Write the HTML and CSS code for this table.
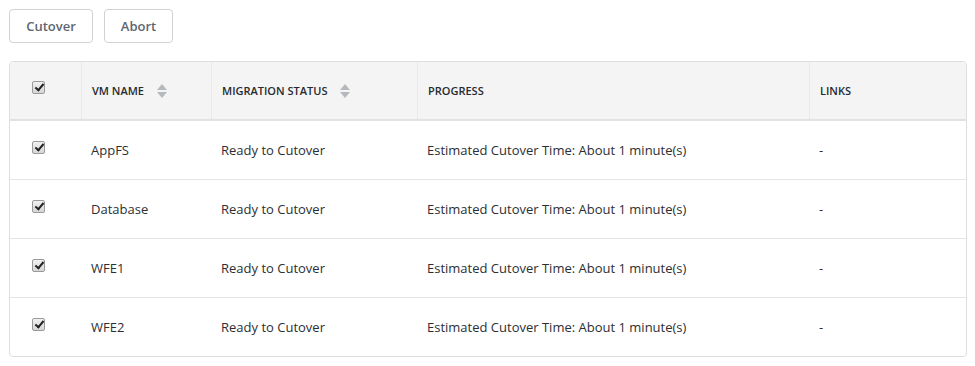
FILE: index.html
```html
<!DOCTYPE html>
<html>
<head>
<meta charset="utf-8">
<link rel="stylesheet" href="styles.css">
</head>
<body>
<div class="page">
  <div class="toolbar">
    <button class="btn">Cutover</button>
    <button class="btn">Abort</button>
  </div>
  <div class="table">
    <div class="row head">
      <div class="cell c-check"><span class="cb"></span></div>
      <div class="cell c-name">VM NAME <span class="sort"><i class="up"></i><i class="down"></i></span></div>
      <div class="cell c-status">MIGRATION STATUS <span class="sort"><i class="up"></i><i class="down"></i></span></div>
      <div class="cell c-progress">PROGRESS</div>
      <div class="cell c-links">LINKS</div>
    </div>
    <div class="row">
      <div class="cell c-check"><span class="cb"></span></div>
      <div class="cell c-name">AppFS</div>
      <div class="cell c-status">Ready to Cutover</div>
      <div class="cell c-progress">Estimated Cutover Time: About 1 minute(s)</div>
      <div class="cell c-links">-</div>
    </div>
    <div class="row">
      <div class="cell c-check"><span class="cb"></span></div>
      <div class="cell c-name">Database</div>
      <div class="cell c-status">Ready to Cutover</div>
      <div class="cell c-progress">Estimated Cutover Time: About 1 minute(s)</div>
      <div class="cell c-links">-</div>
    </div>
    <div class="row">
      <div class="cell c-check"><span class="cb"></span></div>
      <div class="cell c-name">WFE1</div>
      <div class="cell c-status">Ready to Cutover</div>
      <div class="cell c-progress">Estimated Cutover Time: About 1 minute(s)</div>
      <div class="cell c-links">-</div>
    </div>
    <div class="row last">
      <div class="cell c-check"><span class="cb"></span></div>
      <div class="cell c-name">WFE2</div>
      <div class="cell c-status">Ready to Cutover</div>
      <div class="cell c-progress">Estimated Cutover Time: About 1 minute(s)</div>
      <div class="cell c-links">-</div>
    </div>
  </div>
</div>
</body>
</html>
```
FILE: styles.css
```css
* { box-sizing: border-box; }
body {
  margin: 0;
  background: #fff;
  font-family: "Open Sans", "Liberation Sans", sans-serif;
  color: #333;
}
.page {
  padding: 9px 9px 0 9px;
  width: 975px;
}
.toolbar {
  display: flex;
  gap: 11px;
  height: 34px;
}
.btn {
  height: 34px;
  border: 1px solid #cfd3d6;
  border-radius: 4px;
  background: #fff;
  color: #5d6670;
  font-family: inherit;
  font-weight: 600;
  font-size: 13px;
  padding: 0;
}
.btn:first-child { width: 84px; }
.btn:last-child { width: 69px; }
.table {
  margin-top: 18px;
  width: 958px;
  border: 1px solid #dcdfe1;
  border-radius: 4px;
  overflow: hidden;
}
.row {
  display: grid;
  grid-template-columns: 71px 130px 206px 392px 1fr;
  height: 59px;
  border-bottom: 1px solid #e3e5e7;
  font-size: 13px;
}
.row.last { border-bottom: none; height: 58px; }
.row.head {
  background: #f4f4f4;
  border-bottom: 2px solid #e0e3e5;
  font-size: 11px;
  font-weight: 600;
  color: #262b30;
}
.cell {
  display: flex;
  align-items: center;
  padding-left: 10px;
}
.head .cell + .cell { border-left: 1px solid #eaeaea; }
.c-check { padding-left: 22px; padding-bottom: 6px; }
.cb {
  width: 13px;
  height: 13px;
  border: 1px solid #9a9a9a;
  border-radius: 2px;
  background: linear-gradient(#f1f1f1, #d6d6d6);
  position: relative;
}
.cb::after {
  content: "";
  position: absolute;
  left: 3.5px;
  top: 0px;
  width: 3px;
  height: 7px;
  border: solid #222;
  border-width: 0 2px 2px 0;
  transform: rotate(40deg);
}
.sort {
  display: inline-flex;
  flex-direction: column;
  gap: 2px;
  margin-left: 13px;
}
.sort i {
  width: 0; height: 0;
  border-left: 5px solid transparent;
  border-right: 5px solid transparent;
}
.sort .up { border-bottom: 6px solid #b5b9bd; }
.sort .down { border-top: 6px solid #b5b9bd; }
.row:not(.head) .cell { color: #2b2f33; }
```
